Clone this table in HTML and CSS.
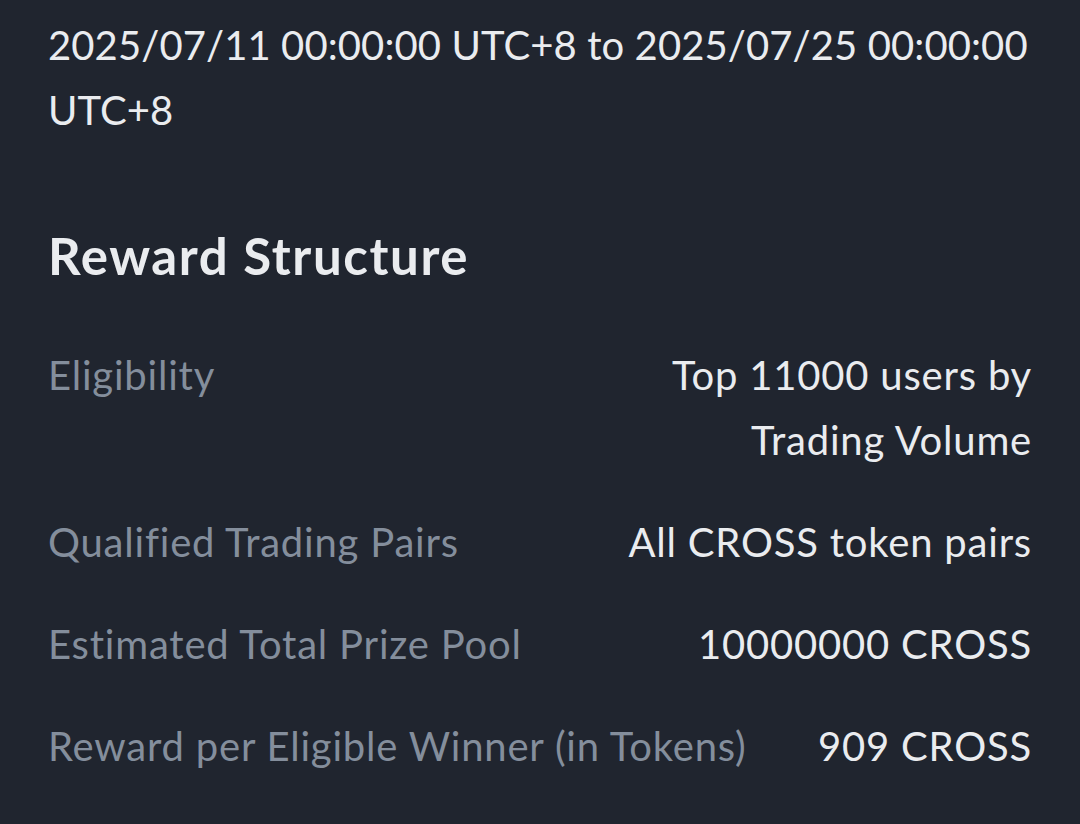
FILE: index.html
```html
<!DOCTYPE html>
<html>
<head>
<meta charset="utf-8">
<link rel="stylesheet" href="styles.css">
</head>
<body>
<div class="page">
  <p class="period">2025/07/11 00:00:00 UTC+8 to 2025/07/25 00:00:00 UTC+8</p>
  <h2 class="title">Reward Structure</h2>
  <div class="rows">
    <div class="row">
      <div class="label">Eligibility</div>
      <div class="value">Top 11000 users by<br>Trading Volume</div>
    </div>
    <div class="row">
      <div class="label">Qualified Trading Pairs</div>
      <div class="value">All CROSS token pairs</div>
    </div>
    <div class="row">
      <div class="label">Estimated Total Prize Pool</div>
      <div class="value">10000000 CROSS</div>
    </div>
    <div class="row">
      <div class="label">Reward per Eligible Winner (in Tokens)</div>
      <div class="value">909 CROSS</div>
    </div>
  </div>
</div>
</body>
</html>
```

FILE: styles.css
```css
html, body {
  margin: 0;
  padding: 0;
  background: #20252f;
}
.page {
  padding: 13px 48px 0 48px;
  font-family: "Lato", "Open Sans", sans-serif;
  color: #eaecef;
}
.period {
  margin: 0;
  font-size: 40px;
  line-height: 65px;
  letter-spacing: 0.1px;
}
.title {
  margin: 80px 0 0 0;
  font-size: 51px;
  font-weight: 700;
  letter-spacing: 1.6px;
  line-height: 65px;
}
.rows {
  margin-top: 55px;
  display: flex;
  flex-direction: column;
  gap: 37px;
}
.row {
  display: flex;
  justify-content: space-between;
  gap: 40px;
  font-size: 40px;
  line-height: 65px;
  letter-spacing: 0.8px;
}
.label {
  color: #848e9c;
  white-space: nowrap;
}
.value {
  text-align: right;
}
```
